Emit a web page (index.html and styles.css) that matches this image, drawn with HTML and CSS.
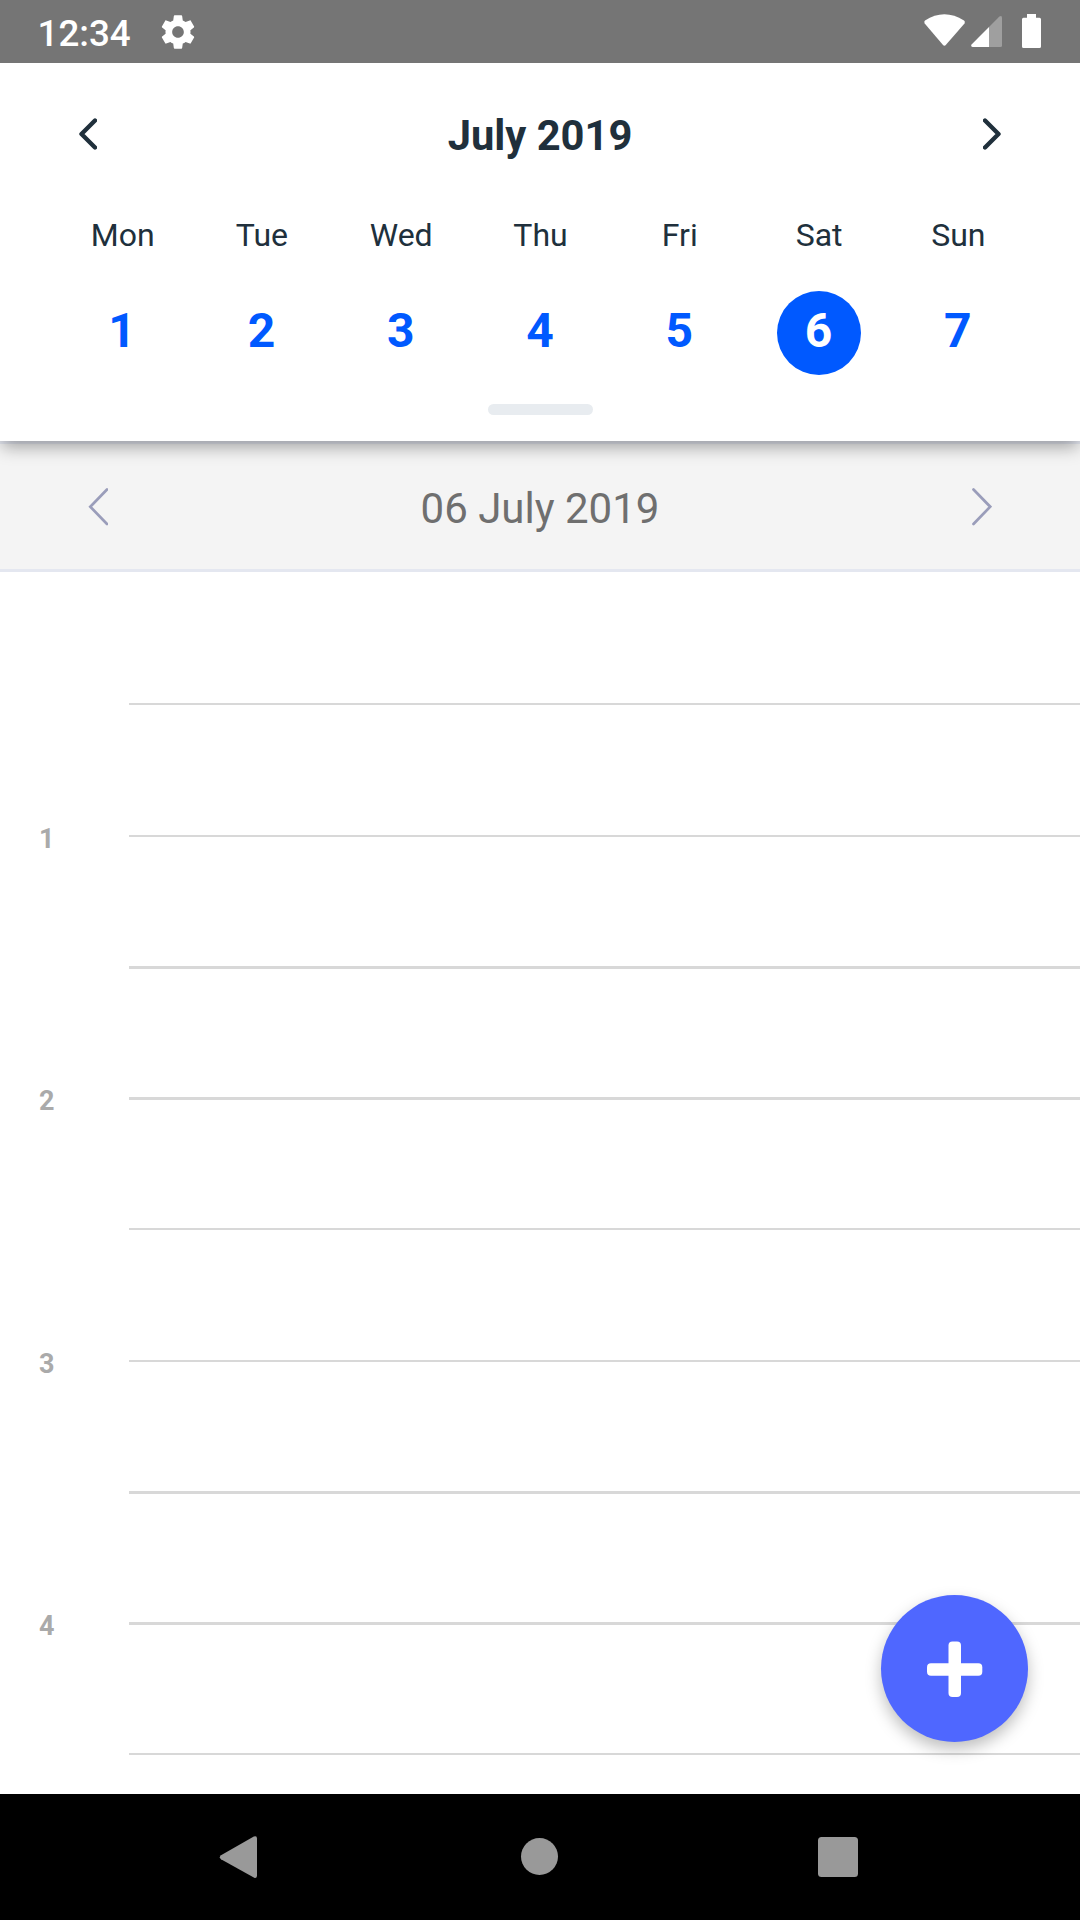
FILE: index.html
```html
<!DOCTYPE html>
<html lang="en">
<head>
<meta charset="utf-8">
<title>July 2019</title>
<link rel="stylesheet" href="styles.css">
</head>
<body>
<div class="screen">
  <header class="status">
    <span class="clock">12:34</span>
    <svg class="gear" viewBox="0 0 24 24"><path d="M19.43 12.98c.04-.32.07-.64.07-.98s-.03-.66-.07-.98l2.11-1.65c.19-.15.24-.42.12-.64l-2-3.46c-.12-.22-.39-.3-.61-.22l-2.49 1c-.52-.4-1.08-.73-1.69-.98l-.38-2.65C14.46 2.18 14.25 2 14 2h-4c-.25 0-.46.18-.49.42l-.38 2.65c-.61.25-1.17.59-1.69.98l-2.49-1c-.23-.09-.49 0-.61.22l-2 3.46c-.13.22-.07.49.12.64l2.11 1.65c-.04.32-.07.65-.07.98s.03.66.07.98l-2.11 1.65c-.19.15-.24.42-.12.64l2 3.46c.12.22.39.3.61.22l2.49-1c.52.4 1.08.73 1.69.98l.38 2.65c.03.24.24.42.49.42h4c.25 0 .46-.18.49-.42l.38-2.65c.61-.25 1.17-.59 1.69-.98l2.49 1c.23.09.49 0 .61-.22l2-3.46c.12-.22.07-.49-.12-.64l-2.11-1.65zM12 15.5c-1.93 0-3.5-1.57-3.5-3.5s1.57-3.5 3.5-3.5 3.5 1.57 3.5 3.5-1.57 3.5-3.5 3.5z"/></svg>
    <svg class="indicators" viewBox="0 0 120 63">
      <path d="M5 20.5Q24.300 8.200 44 20.500Q45.500 21.800 44.500 23.400L26 44.800Q24.400 46.500 22.800 44.800L4.700 23.400Q3.700 21.800 5 20.500Z"/>
      <path class="faint" d="M69 27L79.400 16.600Q82 15 82 18V45.500Q82 47 80.500 47H69Z"/>
      <path d="M69 27V47H52.500Q50.500 46.500 51.300 44.700Z"/>
      <path d="M107 14H116V17.700H119.500Q121 17.700 121 19.200V46.500Q121 48 119.500 48H103.500Q102 48 102 46.500V19.200Q102 17.700 103.500 17.700H107Z"/>
    </svg>
  </header>

  <section class="calendar">
    <div class="month">
      <svg class="arrow" viewBox="0 0 18 32"><path d="M16 2.500L2.500 16L16 29.500"/></svg>
      <h1 class="month-name">July 2019</h1>
      <svg class="arrow" viewBox="0 0 18 32"><path d="M2 2.500L15.500 16L2 29.500"/></svg>
    </div>
    <div class="week names">
      <span>Mon</span><span>Tue</span><span>Wed</span><span>Thu</span><span>Fri</span><span>Sat</span><span>Sun</span>
    </div>
    <div class="week dates">
      <span class="date">1</span><span class="date">2</span><span class="date">3</span><span class="date">4</span><span class="date">5</span><span class="date selected">6</span><span class="date">7</span>
    </div>
    <div class="knob"></div>
  </section>

  <section class="daybar">
    <svg class="thin-arrow" viewBox="0 0 20 38"><path d="M19 1.500L2.300 18.700L19 36"/></svg>
    <h2 class="day-name">06 July 2019</h2>
    <svg class="thin-arrow" viewBox="0 0 20 38"><path d="M1.500 1.500L18.200 18.700L1.500 36"/></svg>
  </section>

  <main class="agenda">
    <div class="slot"></div>
    <div class="slot"><span class="hour">1</span></div>
    <div class="slot thick"></div>
    <div class="slot thick"><span class="hour">2</span></div>
    <div class="slot short"></div>
    <div class="slot"><span class="hour">3</span></div>
    <div class="slot thick"></div>
    <div class="slot thick"><span class="hour">4</span></div>
    <div class="slot short"></div>
    <button class="fab" aria-label="Add event"><svg viewBox="0 0 56 56"><rect x="21.500" y="0.500" width="12.500" height="55.500" rx="4"/><rect x="0" y="22.200" width="55.300" height="12.500" rx="4"/></svg></button>
  </main>

  <nav class="navbar">
    <svg viewBox="0 0 1080 126">
      <path d="M221 61.200L253.800 42.600Q257 41.300 257 44.500V81.500Q257 85 253.800 83.400L221 65.200Q218.600 63.200 221 61.200Z"/>
      <circle cx="539.500" cy="62.500" r="18.500"/>
      <rect x="818" y="43" width="40" height="40" rx="3.500"/>
    </svg>
  </nav>
</div>
</body>
</html>
```
FILE: styles.css
```css
* { box-sizing: border-box; }

body {
  margin: 0;
  background: #fff;
  font-family: Roboto, "Liberation Sans", sans-serif;
}

svg { display: block; }

.screen {
  width: 1080px;
  height: 1920px;
  display: flex;
  flex-direction: column;
  overflow: hidden;
}

/* System status bar */
.status {
  height: 63px;
  flex: none;
  position: relative;
  z-index: 2;
  display: flex;
  align-items: center;
  padding-left: 37.500px;
  background: #757575;
  color: #fff;
  fill: #fff;
}

.clock {
  font-size: 36.750px;
  font-weight: 500;
  line-height: 60px;
  padding-top: 4px;
}

.gear { width: 40px; height: 40px; margin-left: 27px; }

.indicators { width: 120px; height: 63px; margin-left: auto; margin-right: 40px; overflow: visible; }
.indicators .faint { fill: #9f9f9f; }

/* Week calendar */
.calendar {
  height: 378px;
  flex: none;
  position: relative;
  z-index: 1;
  padding: 0 53px;
  background: #fff;
  color: #20303c;
  box-shadow: 0 8px 16px -2px rgba(0, 0, 0, .34);
}

.month {
  height: 145px;
  display: flex;
  align-items: center;
  justify-content: space-between;
  padding: 0 26px;
}

.month-name { margin: 0; font-size: 41.700px; font-weight: 700; line-height: 50px; }

.arrow {
  width: 18px;
  height: 32px;
  margin-bottom: 4px;
  fill: none;
  stroke: #20303c;
  stroke-width: 4.400;
  stroke-linecap: round;
  stroke-linejoin: round;
}

.week { display: grid; grid-template-columns: repeat(7, 1fr); justify-items: center; margin-right: -1px; }
.names { font-size: 32px; line-height: 54px; }
.dates { margin-top: 29px; }

.date {
  width: 84px;
  height: 84px;
  padding-right: 1px;
  border-radius: 50%;
  font-size: 48px;
  font-weight: 700;
  line-height: 79px;
  text-align: center;
  color: #0059ff;
}

.selected { background: #0059ff; color: #fff; }

.knob { width: 105px; height: 11px; margin: 29px auto 0; border-radius: 6px; background: #e8ecf0; }

/* Selected day */
.daybar {
  height: 131px;
  flex: none;
  display: flex;
  align-items: center;
  justify-content: space-between;
  padding: 0 88px;
  background: #f4f4f4;
  border-top: 3px solid #e4e7f0;
  border-bottom: 3px solid #e4e7f0;
}

.day-name { margin: 0; padding-top: 4px; font-size: 42px; font-weight: 400; line-height: 50px; color: #6f6f6f; }

.thin-arrow {
  width: 20px;
  height: 38px;
  fill: none;
  stroke: #9a9dba;
  stroke-width: 2.700;
  stroke-linecap: round;
}

/* Half-hour rows */
.agenda { position: relative; flex: 1; }

.slot {
  height: 132px;
  display: flex;
  align-items: flex-end;
  margin-left: 129px;
  border-bottom: 2px solid #d8d8d8;
}

.slot:first-child { height: 133px; }
.slot.thick { border-bottom-width: 3px; }
.slot.thick:has(.hour) { height: 131px; }
.slot.short { height: 130px; }

.hour {
  width: 60px;
  margin: 0 0 -20px -90px;
  font-size: 27px;
  font-weight: 700;
  line-height: 32px;
  color: #aaa;
}

.fab {
  position: absolute;
  right: 52px;
  bottom: 52px;
  width: 147px;
  height: 147px;
  padding: 0;
  border: 0;
  border-radius: 50%;
  display: grid;
  place-items: center;
  background: #4f67ff;
  box-shadow: 0 7px 16px rgba(0, 0, 0, .26);
}

.fab svg { width: 56px; height: 56px; fill: #fff; }

/* System navigation */
.navbar { height: 126px; flex: none; background: #000; fill: #999; }
```
